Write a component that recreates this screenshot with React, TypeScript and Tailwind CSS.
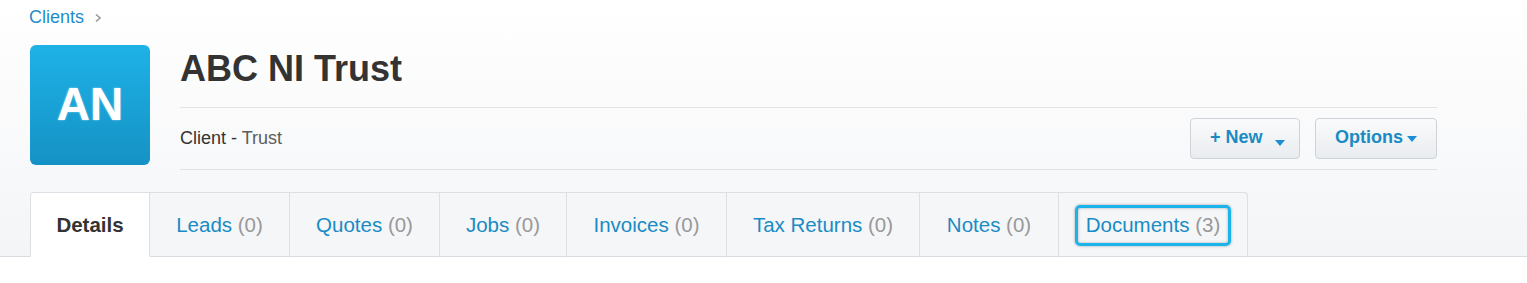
const tabs = [
  { label: "Details", count: null as number | null, w: "w-[120px]" },
  { label: "Leads", count: 0, w: "w-[140px]" },
  { label: "Quotes", count: 0, w: "w-[150px]" },
  { label: "Jobs", count: 0, w: "w-[127px]" },
  { label: "Invoices", count: 0, w: "w-[160px]" },
  { label: "Tax Returns", count: 0, w: "w-[193px]" },
  { label: "Notes", count: 0, w: "w-[139px]" },
  { label: "Documents", count: 3, w: "w-[189px]" },
];

function Caret({ className }: { className?: string }) {
  return (
    <svg width="10" height="6" viewBox="0 0 10 6" className={className}>
      <path d="M0 0h10L5 6z" fill="#1b8fd6" />
    </svg>
  );
}

export default function App() {
  return (
    <div className="min-h-screen bg-white" style={{ fontFamily: '"Liberation Sans", Arial, sans-serif' }}>
      <div className="bg-gradient-to-b from-white to-[#f4f5f7]">
        {/* breadcrumb */}
        <div className="flex items-center pl-[29px] pt-[7px] h-[27px]">
          <a className="text-[18px] leading-[20px] text-[#1f8dcb]">Clients</a>
          <svg width="6" height="8" viewBox="0 0 6 8" className="ml-[11px] mt-[1px]">
            <path d="M1 0.5l4 3.5-4 3.5" fill="none" stroke="#9a9a9a" strokeWidth="1.6" />
          </svg>
        </div>

        {/* header */}
        <div className="flex mt-[18px] pl-[30px]">
          <div className="w-[120px] h-[120px] rounded-[6px] bg-gradient-to-b from-[#1eb2e7] to-[#1592c5] flex items-center justify-center shrink-0">
            <span className="text-white font-bold text-[46px] leading-none mt-[-3px] [text-shadow:0_0_2px_rgba(255,255,255,0.6)]">AN</span>
          </div>
          <div className="ml-[30px] w-[1257px]">
            <div className="h-[63px] pt-[6px] border-b border-[#e1e3e6]">
              <h1 className="text-[36px] leading-[36px] font-bold text-[#333]">ABC NI Trust</h1>
            </div>
            <div className="h-[62px] flex items-center justify-between border-b border-[#e1e3e6]">
              <div className="text-[18px] text-[#333]">
                Client - <span className="text-[#5c5c5c]">Trust</span>
              </div>
              <div className="flex items-center gap-[15px]">
                <button className="h-[41px] w-[110px] rounded-[4px] border border-[#cfd3d7] bg-gradient-to-b from-[#fafbfc] to-[#e9ecef] flex items-center pl-[19px] text-[18px] font-bold text-[#1a8bc4]">
                  <span className="-mt-[2px]">+ New</span>
                  <Caret className="ml-[12px] mt-[9px]" />
                </button>
                <button className="h-[41px] w-[122px] rounded-[4px] border border-[#cfd3d7] bg-gradient-to-b from-[#fafbfc] to-[#e9ecef] flex items-center pl-[19px] text-[18px] font-bold text-[#1a8bc4]">
                  <span className="-mt-[2px]">Options</span>
                  <Caret className="ml-[4px]" />
                </button>
              </div>
            </div>
          </div>
        </div>

        {/* tabs */}
        <div className="mt-[22px] border-b border-[#d9dce0] pl-[30px]">
          <ul className="flex -mb-px">
            {tabs.map((t, i) => {
              const active = i === 0;
              const last = i === tabs.length - 1;
              return (
                <li
                  key={t.label}
                  className={
                    t.w +
                    " h-[65px] flex items-center justify-center pt-[2px] border-t border-[#dcdfe3] text-[20.5px] whitespace-nowrap " +
                    (i === 0 ? "border-l rounded-tl-[4px] " : "") +
                    (last ? "border-r rounded-tr-[4px] " : "border-r ") +
                    (active ? "bg-white border-b border-b-white" : "bg-[#f5f6f8] border-b border-b-[#d9dce0]")
                  }
                >
                  {active ? (
                    <span className="font-bold text-[#333]">{t.label}</span>
                  ) : last ? (
                    <span className="px-[8px] py-[2px] border-[3px] border-[#1ab3ea] rounded-[5px] shadow-[0_0_3px_rgba(0,0,0,0.35),inset_0_0_3px_rgba(0,0,0,0.3)] text-[#1a8bc4]">
                      {t.label} <span className="text-[#999]">({t.count})</span>
                    </span>
                  ) : (
                    <span className="text-[#1a8bc4]">
                      {t.label} <span className="text-[#999]">({t.count})</span>
                    </span>
                  )}
                </li>
              );
            })}
          </ul>
        </div>
      </div>
    </div>
  );
}
